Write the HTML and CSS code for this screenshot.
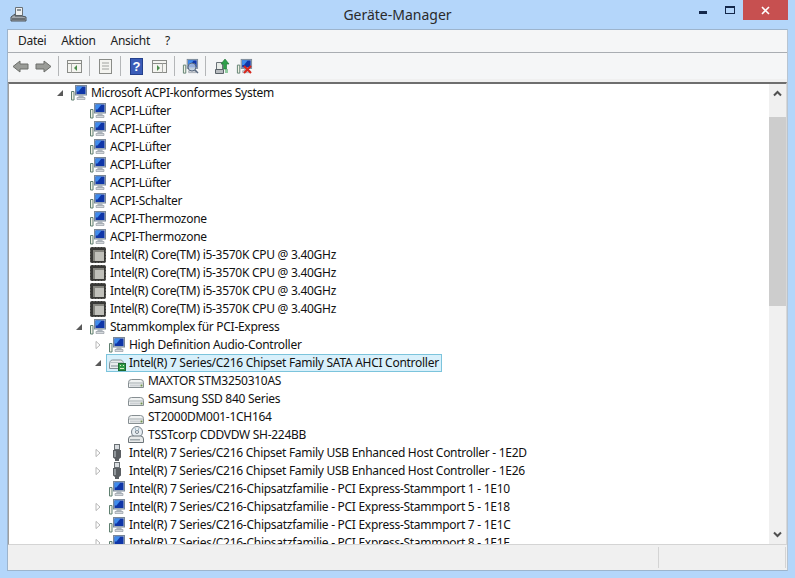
FILE: index.html
```html
<!DOCTYPE html>
<html lang="de">
<head>
<meta charset="utf-8">
<title>Geräte-Manager</title>
<link rel="stylesheet" href="styles.css">
</head>
<body>
<svg class="defs" width="0" height="0" aria-hidden="true">
  <defs>
    <symbol id="pc" viewBox="0 0 18 18">
      <path d="M1.500 7.500h2.500v8.500H1.500z" fill="#f2f2e6" stroke="#5f7f70"/>
      <rect x="5.500" y="1.500" width="11" height="9.500" fill="#b8c4d2" stroke="#7a8898"/>
      <rect x="6.500" y="2.500" width="9" height="7.500" fill="#0f36a8"/>
      <path d="M6.500 2.500h6l-4 5h-2z" fill="#3f8cec"/>
      <path d="M9 11h4l1 2.500H8z" fill="#aeb6be"/>
      <path d="M7 13.500h8v2H7z" fill="#d4d8dc" stroke="#8a929a" stroke-width=".6"/>
    </symbol>
    <symbol id="cpu" viewBox="0 0 18 18">
      <rect x="1" y="1" width="16" height="16" rx="2" fill="#383836"/>
      <rect x="4" y="4" width="11" height="11" fill="#c0c0ba"/>
      <path d="M4 4h11v2H6v9H4z" fill="#85857f"/>
      <path d="M1 5h1M1 8h1M1 11h1M1 14h1M16 5h1M16 8h1M16 11h1M16 14h1M5 1v1M8 1v1M11 1v1M14 1v1M5 16v1M8 16v1M11 16v1M14 16v1" stroke="#7e7e78"/>
    </symbol>
    <symbol id="ctrl" viewBox="0 0 18 18">
      <path d="M1.500 11q0-5 3-5h8q3 0 3 5v3.500h-14z" fill="#e8ecec" stroke="#828e94"/>
      <path d="M2.500 8.500h12" stroke="#b8c2c6"/>
      <rect x="3" y="11" width="7" height="2" fill="#b4bcc0"/>
      <rect x="10.500" y="9.500" width="7" height="7" fill="#2f9a48" stroke="#1c6a30"/>
      <path d="M12 11h1v1h-1zM15 11h1v1h-1zM12 14h4v1h-4z" fill="#d8f0c0"/>
    </symbol>
    <symbol id="disk" viewBox="0 0 18 18">
      <path d="M1.500 10.500q0-3 3-3h9q3 0 3 3v5h-15z" fill="#f0f2f2" stroke="#868e92"/>
      <path d="M2 11h14" stroke="#a4acb0"/>
      <rect x="3" y="12.500" width="10" height="2" fill="#ccd0d4"/>
      <rect x="13.500" y="12.500" width="2" height="2" fill="#6f8f4f"/>
    </symbol>
    <symbol id="dvd" viewBox="0 0 18 18">
      <circle cx="10" cy="6" r="5.500" fill="#e8eef2" stroke="#76808a"/>
      <circle cx="10" cy="6" r="1.500" fill="#fff" stroke="#76808a"/>
      <path d="M8 2l1 3M12 2l-1 3" stroke="#9fb8c8"/>
      <path d="M1.500 13q0-3 3-3h9q3 0 3 3v3.500h-15z" fill="#e8eaea" stroke="#6d757a"/>
      <rect x="3" y="13" width="10" height="1.500" fill="#a0a8ac"/>
    </symbol>
    <symbol id="usb" viewBox="0 0 18 18">
      <rect x="6.500" y="0.500" width="5" height="5" fill="#d8dce0" stroke="#6a7074"/>
      <path d="M5 6h8v7.500l-2 1.500v2H7v-2l-2-1.500z" fill="#5a5e62"/>
      <path d="M6 7h2v6H6z" fill="#92989c"/>
    </symbol>
    <symbol id="open" viewBox="0 0 8 8"><path d="M7 1v6H1z" fill="#595959"/></symbol>
    <symbol id="closed" viewBox="0 0 8 10"><path d="M1.500 .5l5 4.500-5 4.500z" fill="#fff" stroke="#a6a6a6"/></symbol>
  </defs>
</svg>

<div class="window">
  <header class="titlebar">
    <svg class="app-icon" viewBox="0 0 17 17" width="17" height="17">
      <path d="M5.500 1.500h7v8h-7z" fill="#eef0f0" stroke="#6a7278"/>
      <path d="M7 3h4v2H7z" fill="#8a9298"/>
      <path d="M1 11l4-3v2h7l4 1v4H1z" fill="#a2a8ae" stroke="#4c545a"/>
      <path d="M2 13h13" stroke="#333a40"/>
    </svg>
    <h1 class="title">Geräte-Manager</h1>
    <div class="winctl">
      <span class="min"></span>
      <span class="max"></span>
      <span class="close">
        <svg viewBox="0 0 9 9" width="9" height="9"><path d="M1 1l7 7M8 1l-7 7" stroke="#fff" stroke-width="1.600"/></svg>
      </span>
    </div>
  </header>

  <div class="client">
    <nav class="menubar">
      <span>Datei</span><span>Aktion</span><span>Ansicht</span><span>?</span>
    </nav>
    <div class="toolbar">
      <svg class="tb" viewBox="0 0 17 17"><path d="M1 8.500L8 3v3h8v5H8v3z" fill="#9a9c98" stroke="#6c6e6a"/></svg>
      <svg class="tb" viewBox="0 0 17 17"><path d="M16 8.500L9 3v3H1v5h8v3z" fill="#9a9c98" stroke="#6c6e6a"/></svg>
      <i class="sep"></i>
      <svg class="tb" viewBox="0 0 17 17"><rect x="1.500" y="2.500" width="14" height="12" fill="#f4f4f0" stroke="#8a8c88"/><path d="M1.500 5.500h14" stroke="#8a8c88"/><path d="M5.500 5.500v9" stroke="#a8aaa6"/><path d="M11 7v6l-3-3z" fill="#4a8c4a"/></svg>
      <i class="sep"></i>
      <svg class="tb" viewBox="0 0 17 17"><rect x="2.500" y="1.500" width="12" height="14" fill="#f4f4f0" stroke="#8a8c88"/><path d="M5 5h7M5 8h7M5 11h7" stroke="#a0a29e"/></svg>
      <i class="sep"></i>
      <svg class="tb" viewBox="0 0 17 17"><rect x="2.500" y="0.500" width="12" height="16" fill="#3a5cb8" stroke="#24408c"/><text x="8.500" y="13" class="qm">?</text></svg>
      <svg class="tb" viewBox="0 0 17 17"><rect x="1.500" y="2.500" width="14" height="12" fill="#f4f4f0" stroke="#8a8c88"/><path d="M1.500 5.500h14" stroke="#8a8c88"/><path d="M11.500 5.500v9" stroke="#a8aaa6"/><path d="M6 7v6l3-3z" fill="#4a8c4a"/></svg>
      <i class="sep"></i>
      <svg class="tb" viewBox="0 0 17 17"><use href="#pc"/><circle cx="10" cy="9" r="4" fill="#cfe0f0" fill-opacity=".7" stroke="#5a6a80"/><path d="M13 12l3 3" stroke="#5a6a80" stroke-width="1.500"/></svg>
      <i class="sep"></i>
      <svg class="tb" viewBox="0 0 17 17"><path d="M3.500 4.500h6v7h-6z" fill="#e8ece8" stroke="#6a7278"/><path d="M2.500 11.500h8v4h-8z" fill="#b8bcc0" stroke="#5a6268"/><path d="M12 1l4 5h-2.500v5h-3V6H8z" fill="#2fa04a" stroke="#1a7030" stroke-width=".6"/><path d="M12 12h3M12 14h3" stroke="#2fa04a"/></svg>
      <svg class="tb" viewBox="0 0 17 17"><use href="#pc"/><path d="M8 8l7 7M15 8l-7 7" stroke="#d8261c" stroke-width="2"/></svg>
    </div>

    <div class="panel">
      <div class="tree">
        <div class="row d0"><svg class="tw"><use href="#open"/></svg><svg class="ic"><use href="#pc"/></svg><span class="lbl">Microsoft ACPI-konformes System</span></div>
        <div class="row d1"><i class="tw"></i><svg class="ic"><use href="#pc"/></svg><span class="lbl">ACPI-Lüfter</span></div>
        <div class="row d1"><i class="tw"></i><svg class="ic"><use href="#pc"/></svg><span class="lbl">ACPI-Lüfter</span></div>
        <div class="row d1"><i class="tw"></i><svg class="ic"><use href="#pc"/></svg><span class="lbl">ACPI-Lüfter</span></div>
        <div class="row d1"><i class="tw"></i><svg class="ic"><use href="#pc"/></svg><span class="lbl">ACPI-Lüfter</span></div>
        <div class="row d1"><i class="tw"></i><svg class="ic"><use href="#pc"/></svg><span class="lbl">ACPI-Lüfter</span></div>
        <div class="row d1"><i class="tw"></i><svg class="ic"><use href="#pc"/></svg><span class="lbl">ACPI-Schalter</span></div>
        <div class="row d1"><i class="tw"></i><svg class="ic"><use href="#pc"/></svg><span class="lbl">ACPI-Thermozone</span></div>
        <div class="row d1"><i class="tw"></i><svg class="ic"><use href="#pc"/></svg><span class="lbl">ACPI-Thermozone</span></div>
        <div class="row d1"><i class="tw"></i><svg class="ic"><use href="#cpu"/></svg><span class="lbl">Intel(R) Core(TM) i5-3570K CPU @ 3.40GHz</span></div>
        <div class="row d1"><i class="tw"></i><svg class="ic"><use href="#cpu"/></svg><span class="lbl">Intel(R) Core(TM) i5-3570K CPU @ 3.40GHz</span></div>
        <div class="row d1"><i class="tw"></i><svg class="ic"><use href="#cpu"/></svg><span class="lbl">Intel(R) Core(TM) i5-3570K CPU @ 3.40GHz</span></div>
        <div class="row d1"><i class="tw"></i><svg class="ic"><use href="#cpu"/></svg><span class="lbl">Intel(R) Core(TM) i5-3570K CPU @ 3.40GHz</span></div>
        <div class="row d1"><svg class="tw"><use href="#open"/></svg><svg class="ic"><use href="#pc"/></svg><span class="lbl">Stammkomplex für PCI-Express</span></div>
        <div class="row d2"><svg class="tw"><use href="#closed"/></svg><svg class="ic"><use href="#pc"/></svg><span class="lbl">High Definition Audio-Controller</span></div>
        <div class="row d2 selected"><svg class="tw"><use href="#open"/></svg><div class="sel"><svg class="ic"><use href="#ctrl"/></svg><span class="lbl">Intel(R) 7 Series/C216 Chipset Family SATA AHCI Controller</span></div></div>
        <div class="row d3"><i class="tw"></i><svg class="ic"><use href="#disk"/></svg><span class="lbl">MAXTOR STM3250310AS</span></div>
        <div class="row d3"><i class="tw"></i><svg class="ic"><use href="#disk"/></svg><span class="lbl">Samsung SSD 840 Series</span></div>
        <div class="row d3"><i class="tw"></i><svg class="ic"><use href="#disk"/></svg><span class="lbl">ST2000DM001-1CH164</span></div>
        <div class="row d3"><i class="tw"></i><svg class="ic"><use href="#dvd"/></svg><span class="lbl">TSSTcorp CDDVDW SH-224BB</span></div>
        <div class="row d2"><svg class="tw"><use href="#closed"/></svg><svg class="ic"><use href="#usb"/></svg><span class="lbl">Intel(R) 7 Series/C216 Chipset Family USB Enhanced Host Controller - 1E2D</span></div>
        <div class="row d2"><svg class="tw"><use href="#closed"/></svg><svg class="ic"><use href="#usb"/></svg><span class="lbl">Intel(R) 7 Series/C216 Chipset Family USB Enhanced Host Controller - 1E26</span></div>
        <div class="row d2"><i class="tw"></i><svg class="ic"><use href="#pc"/></svg><span class="lbl">Intel(R) 7 Series/C216-Chipsatzfamilie - PCI Express-Stammport 1 - 1E10</span></div>
        <div class="row d2"><svg class="tw"><use href="#closed"/></svg><svg class="ic"><use href="#pc"/></svg><span class="lbl">Intel(R) 7 Series/C216-Chipsatzfamilie - PCI Express-Stammport 5 - 1E18</span></div>
        <div class="row d2"><svg class="tw"><use href="#closed"/></svg><svg class="ic"><use href="#pc"/></svg><span class="lbl">Intel(R) 7 Series/C216-Chipsatzfamilie - PCI Express-Stammport 7 - 1E1C</span></div>
        <div class="row d2"><svg class="tw"><use href="#closed"/></svg><svg class="ic"><use href="#pc"/></svg><span class="lbl">Intel(R) 7 Series/C216-Chipsatzfamilie - PCI Express-Stammport 8 - 1E1E</span></div>
      </div>
      <div class="scrollbar">
        <svg class="sb-arrow" viewBox="0 0 9 7" width="9" height="7"><path d="M1 5.500l3.500-3.500 3.500 3.500" fill="none" stroke="#505050" stroke-width="2"/></svg>
        <div class="sb-track"><div class="sb-thumb"></div></div>
        <svg class="sb-arrow" viewBox="0 0 9 7" width="9" height="7"><path d="M1 1.500l3.500 3.500 3.500-3.500" fill="none" stroke="#505050" stroke-width="2"/></svg>
      </div>
    </div>

    <footer class="statusbar"><div class="st-a"></div><div class="st-b"></div></footer>
  </div>
</div>
</body>
</html>
```

FILE: styles.css
```css
* { box-sizing: border-box; }
html, body { margin: 0; padding: 0; }
body {
  width: 795px;
  height: 578px;
  overflow: hidden;
  background: #b4d6fa;
  font-family: "Noto Sans", "Open Sans", sans-serif;
  color: #111;
}
.defs { position: absolute; }
.window { display: flex; flex-direction: column; height: 578px; padding: 0 7px 7px 7px; }

.titlebar { display: flex; align-items: flex-start; height: 29px; flex: none; margin: 0 -7px; padding-left: 10px; position: relative; }
.app-icon { margin-top: 6px; }
.title { position: absolute; left: 0; right: 0; top: 5px; margin: 0; text-align: center; font-size: 14px; line-height: 20px; font-weight: 400; color: #2a2a2a; }
.winctl { margin-left: auto; display: flex; align-items: flex-start; margin-right: 7px; position: relative; }
.min { width: 8px; height: 3px; background: #14284a; margin-top: 11px; margin-right: 18px; }
.max { width: 10px; height: 8px; border: 1px solid #14284a; border-top-width: 2px; margin-top: 6px; margin-right: 8px; }
.close { width: 45px; height: 20px; background: #c75050; display: flex; align-items: center; justify-content: center; }

.client { flex: 1; display: flex; flex-direction: column; background: #f0f0f0; border: 1px solid #9db4cc; border-right-color: #b8c4d0; min-height: 0; }

.menubar { height: 23px; flex: none; display: flex; gap: 15px; align-items: center; padding-left: 10px; padding-bottom: 1px; background: #f5f6f7; border-bottom: 1px solid #a9adb2; font-size: 12px; letter-spacing: -.3px; color: #222; }
.toolbar { height: 26px; flex: none; display: flex; align-items: center; padding-left: 4px; background: #f5f6f7; }
.tb { width: 17px; height: 17px; flex: none; margin-right: 6px; }
.sep { width: 1px; height: 20px; background: #b4b6b8; margin-right: 7px; flex: none; }
.qm { font-family: "Liberation Sans", sans-serif; font-size: 13px; font-weight: 700; fill: #fff; text-anchor: middle; }

.panel { flex: 1; min-height: 0; display: flex; margin-top: 3px; border-top: 2px solid #6e6e6e; border-left: 1px solid #a0a0a0; border-right: 1px solid #d8d8d8; border-bottom: 1px solid #d4d4d4; background: #fff; }
.tree { flex: 1; min-width: 0; overflow: hidden; background: #fff; }
.row { height: 18px; display: flex; align-items: center; white-space: nowrap; font-size: 12px; letter-spacing: -.28px; }
.d0 { padding-left: 47px; }
.d1 { padding-left: 66px; }
.d2 { padding-left: 85px; }
.d3 { padding-left: 104px; }
.tw { width: 8px; height: 8px; margin-right: 6px; flex: none; display: block; }
.ic { width: 18px; height: 18px; flex: none; margin-right: 3px; }
.lbl { display: block; line-height: 18px; }
.sel { display: flex; align-items: center; height: 18px; background: #d8f0fb; border: 1px solid #7cc4dc; margin-left: -2px; padding-left: 1px; padding-right: 2px; }

.scrollbar { width: 17px; flex: none; display: flex; flex-direction: column; align-items: center; background: #f0f0f0; padding: 6px 0; }
.sb-arrow { flex: none; }
.sb-track { flex: 1; width: 100%; padding-top: 20px; padding-bottom: 221px; margin: 0 0 4px; }
.sb-thumb { height: 100%; background: #cdcdcd; }

.statusbar { height: 25px; flex: none; display: flex; background: #f0f0f0; padding-top: 2px; padding-bottom: 2px; }
.st-a { width: 651px; border-right: 1px solid #d4d4d4; }
.st-b { flex: 1; border-right: 1px solid #d4d4d4; margin-right: 1px; }
```
